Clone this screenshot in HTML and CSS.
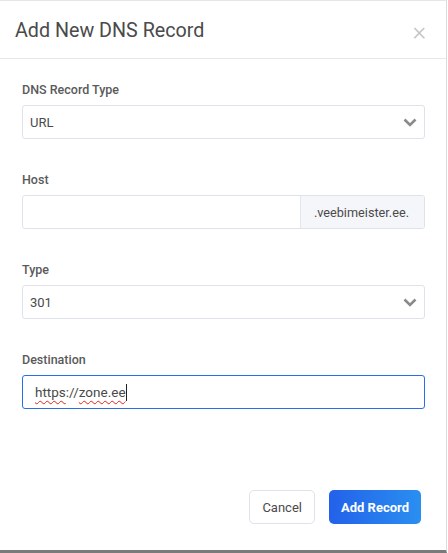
FILE: index.html
```html
<!DOCTYPE html>
<html lang="en">

<head>
  <meta charset="UTF-8">
  <meta name="viewport" content="width=device-width, initial-scale=1.0">
  <title>Add New DNS Record</title>
  <link rel="stylesheet" href="styles.css">
</head>

<body>

  <div class="modal">
    <div class="modal-header">
      <h1 class="modal-title">Add New DNS Record</h1>
      <span class="close">&times;</span>
    </div>

    <div class="modal-body">
      <div class="field">
        <label>DNS Record Type</label>
        <div class="select">
          <span>URL</span>
          <svg class="chevron" width="14" height="9" viewBox="0 0 14 9">
            <path d="M1.5 1.5 L7 7 L12.5 1.5" fill="none" stroke="#8a8a8a" stroke-width="2.6" />
          </svg>
        </div>
      </div>

      <div class="field">
        <label>Host</label>
        <div class="input-group">
          <div class="input"></div>
          <div class="addon">.veebimeister.ee.</div>
        </div>
      </div>

      <div class="field">
        <label>Type</label>
        <div class="select">
          <span>301</span>
          <svg class="chevron" width="14" height="9" viewBox="0 0 14 9">
            <path d="M1.5 1.5 L7 7 L12.5 1.5" fill="none" stroke="#8a8a8a" stroke-width="2.6" />
          </svg>
        </div>
      </div>

      <div class="field">
        <label>Destination</label>
        <div class="input focused">
          <span class="typo">https</span>://<span class="typo">zone.ee</span><span class="caret"></span>
        </div>
      </div>
    </div>

    <div class="modal-footer">
      <button class="btn btn-light">Cancel</button>
      <button class="btn btn-primary">Add Record</button>
    </div>
  </div>

</body>

</html>
```

FILE: styles.css
```css
body {
  margin: 0;
  font-family: Roboto, 'Liberation Sans', sans-serif;
  background-color: #fff;
  color: #444;
}

.modal {
  width: 447px;
  height: 553px;
  border-top: 1px solid #e6e6ea;
  border-right: 1px solid #dcdcdc;
  border-bottom: 3px solid #7a7a7a;
  display: flex;
  flex-direction: column;
  box-sizing: border-box;
}

.modal-header {
  display: flex;
  align-items: center;
  justify-content: space-between;
  height: 57px;
  padding: 0 20px 0 15px;
  border-bottom: 1px solid #e8e8ec;
}

.modal-title {
  margin: 0;
  font-size: 19.7px;
  font-weight: 400;
  color: #4a4a4a;
  padding-top: 1px;
}

.close {
  font-size: 26px;
  color: #c4c4c4;
  line-height: 1;
  font-weight: 300;
  padding-top: 2px;
}

.modal-body {
  padding: 23px 21px 0 22px;
  flex: 1;
}

.field {
  margin-bottom: 33px;
}

label {
  display: block;
  font-size: 12.5px;
  font-weight: 500;
  color: #5a5a5a;
  margin-bottom: 8px;
  line-height: 15px;
}

.select,
.input,
.input-group {
  height: 34px;
  box-sizing: border-box;
  border: 1px solid #dfe2ea;
  border-radius: 3px;
  font-size: 13px;
  color: #4a4a4a;
  display: flex;
  align-items: center;
}

.select {
  justify-content: space-between;
  padding: 0 7px 0 7px;
}

.chevron {
  display: block;
  margin-top: 1px;
}

.input-group {
  overflow: hidden;
}

.input-group .input {
  border: none;
  flex: 1;
  height: 100%;
}

.addon {
  height: 100%;
  display: flex;
  align-items: center;
  padding: 0 15px 0 13px;
  background-color: #f5f6fa;
  border-left: 1px solid #e3e5ec;
  color: #4a4a4a;
  font-size: 12.7px;
}

.input.focused {
  border-color: #2a6ee6;
  padding-left: 12px;
  font-size: 13.5px;
}

.typo {
  text-decoration: underline wavy #e02020;
  text-decoration-thickness: 1px;
  text-underline-offset: 3px;
}

.caret {
  display: inline-block;
  width: 1px;
  height: 17px;
  background-color: #222;
}

.modal-footer {
  display: flex;
  justify-content: flex-end;
  gap: 14px;
  padding: 0 25px 26px 0;
}

.btn {
  height: 34px;
  border-radius: 5px;
  font-family: Roboto, 'Liberation Sans', sans-serif;
  font-size: 13px;
  cursor: pointer;
}

.btn-light {
  background-color: #fff;
  border: 1px solid #dfe2ea;
  color: #4a4a4a;
  padding: 0 12px;
}

.btn-primary {
  border: none;
  color: #fff;
  font-weight: 700;
  padding: 0 12px;
  background: linear-gradient(90deg, #2361ea, #2a8ff0);
}
```
